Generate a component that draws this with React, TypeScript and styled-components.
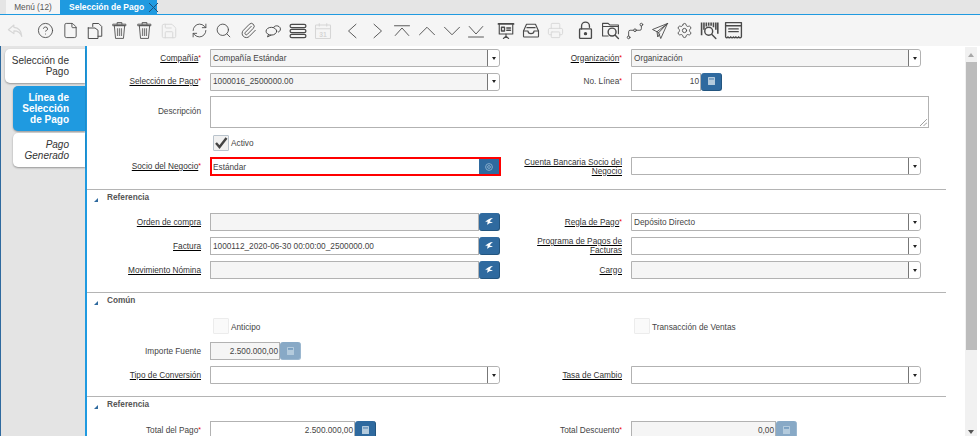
import React from 'react'
import styled, { createGlobalStyle } from 'styled-components'
import { CircleHelp, File, Save, RefreshCw, Search, Paperclip, Printer, Settings } from 'lucide-react'

const GlobalStyle = createGlobalStyle`
  html, body {
    margin: 0;
    padding: 0;
    background: #fff;
    overflow: hidden;
  }
  * {
    box-sizing: border-box;
  }
  body {
    font-family: "Liberation Sans", Arial, sans-serif;
    font-size: 8.25px;
    color: #333;
  }
`

const Page = styled.div`
  width: 980px;
  height: 436px;
  display: flex;
  flex-direction: column;
  overflow: hidden;
`

const TabBar = styled.div`
  height: 15px;
  flex: none;
  display: flex;
  padding-left: 6px;
  background: #e5e5e5;
  border-bottom: 1px solid #1f9ae0;
`

const TopTab = styled.div<{ $active?: boolean }>`
  height: 14px;
  display: flex;
  align-items: center;
  padding: ${(p) => (p.$active ? '0 0 0 9px' : '0 8px')};
  width: ${(p) => (p.$active ? '97px' : '54px')};
  gap: 4px;
  justify-content: ${(p) => (p.$active ? 'flex-start' : 'center')};
  background: ${(p) => (p.$active ? '#1f9ae0' : '#f5f5f5')};
  color: ${(p) => (p.$active ? '#fff' : '#555')};
  font-weight: ${(p) => (p.$active ? 'bold' : 'normal')};
  font-size: ${(p) => (p.$active ? '8.5px' : '8.25px')};
  white-space: nowrap;
`

const CloseMark = styled.svg`
  width: 11px;
  height: 11px;
  flex: none;
  stroke: #1d4f78;
  stroke-width: 1;
`

const Toolbar = styled.div`
  height: 31px;
  flex: none;
  display: flex;
  padding-left: 3.6px;
  gap: 5px;
  background: #f5f5f5;
`

const ToolGroup = styled.div`
  display: flex;
`

const ToolButton = styled.div<{ $off?: boolean }>`
  width: 24.75px;
  height: 31px;
  display: flex;
  align-items: center;
  justify-content: center;
  color: ${(p) => (p.$off ? '#d6d6d6' : '#4a4a4a')};
`

const Main = styled.div`
  flex: 1;
  min-height: 0;
  display: flex;
  border-left: 1px solid #2f6a9f;
`

const SideTabs = styled.div`
  width: 86px;
  flex: none;
  display: flex;
  flex-direction: column;
  align-items: flex-end;
  padding-top: 3px;
  background: #e4e4e4;
  border-right: 2px solid #1f9ae0;
`

const SideTab = styled.div<{ $level: number; $selected?: boolean }>`
  width: ${(p) => (p.$level ? '72px' : '80px')};
  margin-bottom: 2.5px;
  padding: 6px 16px 6px 4px;
  text-align: right;
  font-size: 10px;
  line-height: 11px;
  border-radius: 5px 0 0 5px;
  background: ${(p) => (p.$selected ? '#1f9ae0' : '#fff')};
  color: ${(p) => (p.$selected ? '#fff' : '#333')};
  font-weight: ${(p) => (p.$selected ? 'bold' : 'normal')};
  font-style: ${(p) => (p.$level && !p.$selected ? 'italic' : 'normal')};
  box-shadow: 0 1px 2px rgba(0, 0, 0, 0.35);
`

const Form = styled.div`
  width: 878px;
  flex: none;
  padding-top: 3px;
  overflow: hidden;
`

const Section = styled.div<{ $pad?: number }>`
  margin-right: 19px;
  padding-bottom: ${(p) => p.$pad ?? 13}px;
  border-bottom: 1px solid #b4b4b4;
  &:last-child {
    border-bottom: 0;
  }
`

const SectionHead = styled.div<{ $height?: number }>`
  height: ${(p) => p.$height ?? 23}px;
  display: flex;
  align-items: flex-start;
  gap: 9px;
  padding: 2.5px 0 0 7px;
  font-weight: bold;
  color: #555;
  line-height: 10px;
`

const Toggle = styled.svg`
  width: 4px;
  height: 4px;
  margin-top: 5px;
  fill: #2f6a9f;
`

const Grid = styled.div<{ $gap?: number }>`
  display: grid;
  grid-template-columns: 114px 290px 113px 290px;
  column-gap: 9px;
  row-gap: ${(p) => p.$gap ?? 6}px;
  grid-auto-rows: minmax(18px, auto);
`

const Label = styled.div<{ $lift?: boolean }>`
  display: flex;
  justify-content: flex-end;
  align-items: center;
  text-align: right;
  line-height: 9px;
  color: #444;
  padding-bottom: ${(p) => (p.$lift ? '2px' : '0')};
`

const Linked = styled.span`
  color: #333;
  text-decoration: underline;
  text-decoration-color: #000;
`

const Star = styled.span`
  color: #e00;
  font-size: 7px;
  position: relative;
  top: -1px;
`

const Control = styled.div`
  display: flex;
  align-items: stretch;
  min-width: 0;
`

const Input = styled.div<{ $readOnly?: boolean; $width?: number; $number?: boolean }>`
  height: 18px;
  flex: ${(p) => (p.$width ? 'none' : '1')};
  width: ${(p) => (p.$width ? `${p.$width}px` : 'auto')};
  display: flex;
  align-items: center;
  justify-content: ${(p) => (p.$number ? 'flex-end' : 'flex-start')};
  padding: 0 1px 0 2px;
  border: 1px solid #b2b2b2;
  background: ${(p) => (p.$readOnly ? '#f5f5f5' : '#fff')};
  color: #444;
  white-space: nowrap;
`

const ComboBox = styled.div<{ $readOnly?: boolean }>`
  height: 18px;
  flex: 1;
  display: flex;
  border: 1px solid #b2b2b2;
  border-radius: 0 3px 3px 0;
  background: ${(p) => (p.$readOnly ? '#f5f5f5' : '#fff')};
  color: #444;
`

const ComboText = styled.div`
  flex: 1;
  display: flex;
  align-items: center;
  padding-left: 2px;
`

const ComboArrow = styled.div`
  width: 12px;
  display: flex;
  align-items: center;
  justify-content: center;
  border-left: 1px solid #777;
  background: #fff;
  border-radius: 0 3px 3px 0;
  &::after {
    content: '';
    border: 2.5px solid transparent;
    border-top: 3px solid #222;
    border-bottom: 0;
  }
`

const ActionButton = styled.div<{ $off?: boolean }>`
  width: 21px;
  height: 18px;
  flex: none;
  display: flex;
  align-items: center;
  justify-content: center;
  border-radius: 3px;
  background: ${(p) => (p.$off ? '#88a9c6' : '#2f6a9f')};
  border-bottom: 1px solid ${(p) => (p.$off ? '#9bb7cf' : '#23557f')};
  border-right: 1px solid ${(p) => (p.$off ? '#9bb7cf' : '#23557f')};
`

const Description = styled.div`
  width: 719px;
  height: 32px;
  position: relative;
  border: 1px solid #b2b2b2;
  grid-column: 2 / 5;
`

const Grip = styled.svg`
  position: absolute;
  right: 1px;
  bottom: 1px;
  width: 7px;
  height: 7px;
  stroke: #555;
  stroke-width: 0.8;
  stroke-dasharray: 1 0.5;
`

const HighlightField = styled.div`
  width: 291px;
  height: 19px;
  display: flex;
  align-items: center;
  border: 2px solid #f00;
  padding-left: 1px;
  color: #444;
`

const HighlightText = styled.div`
  flex: 1;
  padding-top: 1px;
`

const HighlightButton = styled.div`
  width: 20px;
  height: 15px;
  display: flex;
  align-items: center;
  justify-content: center;
  background: #2f6a9f;
`

const CheckField = styled.div<{ $tall?: boolean }>`
  display: flex;
  align-items: center;
  gap: 2px;
  padding-left: 3px;
  height: ${(p) => (p.$tall ? '20px' : '18px')};
  color: #444;
`

const CheckText = styled.span`
  padding-top: 2px;
`

const CheckBox = styled.div<{ $checked?: boolean }>`
  width: 16px;
  height: 16px;
  display: flex;
  align-items: center;
  justify-content: center;
  border: 1px solid ${(p) => (p.$checked ? '#b9c3cc' : '#ececec')};
  border-radius: 1px;
  background: ${(p) => (p.$checked ? '#f1f1f1' : '#fafafa')};
`

const Scrollbar = styled.div`
  width: 12px;
  flex: none;
  height: 392px;
  margin-top: 1px;
  display: flex;
  flex-direction: column;
  background: #f1f1f1;
`

const ScrollArrow = styled.div<{ $down?: boolean }>`
  height: 15px;
  flex: none;
  display: flex;
  align-items: center;
  justify-content: center;
  &::after {
    content: '';
    border: 3.5px solid transparent;
    ${(p) => (p.$down ? 'border-top: 4px solid #555; border-bottom: 0;' : 'border-bottom: 4px solid #a8a8a8; border-top: 0;')}
  }
`

const ScrollThumb = styled.div`
  height: 288px;
  margin-left: 1px;
  background: #bcbcbc;
`

const ScrollRest = styled.div`
  flex: 1;
`

const Ic: React.FC<{ size?: number; width?: number; children: React.ReactNode }> = ({ size = 17, width = 1.4, children }) => (
  <svg
    width={size}
    height={size}
    viewBox="0 0 24 24"
    fill="none"
    stroke="currentColor"
    strokeWidth={width}
    strokeLinecap="round"
    strokeLinejoin="round"
  >
    {children}
  </svg>
)

const stroke = { size: 17, strokeWidth: 1.25 }

const UndoIcon = () => (
  <Ic size={19}>
    <path d="M10 5 3 11l7 5v-3.5c5 0 8 1.5 10 7-.5-7-3.5-11-10-11.5V5Z" />
  </Ic>
)

const CopyDocsIcon = () => (
  <Ic size={18} width={1.3}>
    <path d="M9 6V2h8l4 4v13h-5" />
    <path d="M3 8h9l4 3v11H3V8Z" />
  </Ic>
)

const TrashIcon = () => (
  <Ic size={19} width={1.1}>
    <path d="M9 4V2h6v2M4 4h16v2H4Z" />
    <path d="M5.500 6 7 22h10l1.500-16Z" />
    <path d="M9.500 9v10M12 9v10M14.500 9v10" strokeWidth="1.500" strokeLinecap="butt" opacity="0.7" />
  </Ic>
)

const ChatIcon = () => (
  <Ic>
    <ellipse cx="9" cy="13" rx="7.500" ry="5.500" />
    <path d="M5 17.500 3.500 21l5-2.500" />
    <path d="M12 7.500C13.500 5.600 16 5 18 5.600c3 .9 4.500 3.500 3.500 6-.5 1.200-1.300 2-2.500 2.600" />
  </Ic>
)

const StackIcon = () => (
  <Ic size={20} width={1.5}>
    <rect x="2.500" y="4" width="19" height="4" rx="2" />
    <rect x="2.500" y="10" width="19" height="4" rx="2" />
    <rect x="2.500" y="16" width="19" height="4" rx="2" />
  </Ic>
)

const CalendarIcon = () => (
  <svg width="18" height="18" viewBox="0 0 24 24" fill="none" stroke="currentColor" strokeWidth="1.400">
    <rect x="2" y="4" width="20" height="18" rx="1" />
    <path d="M2 9h20M7 1.500V6M17 1.500V6" />
    <text x="12" y="20" textAnchor="middle" fontSize="9" fontWeight="bold" fill="currentColor" stroke="none" fontFamily="Liberation Sans">
      31
    </text>
  </svg>
)

const ChevLeft = () => (
  <Ic size={18} width={1.2}>
    <path d="M16 3 6 12l10 9" />
  </Ic>
)
const ChevRight = () => (
  <Ic size={18} width={1.2}>
    <path d="m8 3 10 9-10 9" />
  </Ic>
)
const ChevFirst = () => (
  <Ic size={18} width={1.2}>
    <path d="M2 5h20M3 18 12 8l9 10" />
  </Ic>
)
const ChevUp = () => (
  <Ic size={18} width={1.2}>
    <path d="m2 17 10-10 10 10" />
  </Ic>
)
const ChevDown = () => (
  <Ic size={18} width={1.2}>
    <path d="m2 7 10 10L22 7" />
  </Ic>
)
const ChevLast = () => (
  <Ic size={18} width={1.2}>
    <path d="M3 6 12 16l9-10M2 20h20" />
  </Ic>
)

const ReportIcon = () => (
  <Ic size={18} width={1.5}>
    <path d="M2 2.500h20" strokeWidth="2.400" />
    <path d="M3 3v13h18V3" />
    <path d="M6 7h4v5H6ZM13 8h5M13 11h5" strokeWidth="1.800" />
    <path d="M12 16v3M8.500 22 12 19l3.500 3" />
  </Ic>
)

const TrayIcon = () => (
  <Ic size={18} width={1.5}>
    <path d="M6 3h12l4 9v7a1 1 0 0 1-1 1H3a1 1 0 0 1-1-1v-7l4-9Z" />
    <path d="M2 12h6c0 2.500 1.500 3.500 4 3.500s4-1 4-3.500h6M6.500 7.500h11" />
  </Ic>
)

const LockIcon = () => (
  <Ic size={19} width={1.7}>
    <rect x="4.500" y="10" width="15" height="12" rx="1" />
    <path d="M7 10V6.500a5 5 0 0 1 10 0V8" />
    <circle cx="12" cy="16" r="1.300" fill="currentColor" />
  </Ic>
)

const FolderSearchIcon = () => (
  <Ic size={19}>
    <path d="M9 19H2V3h7l2 2h11v11" />
    <path d="M2 7h20" />
    <circle cx="14" cy="14" r="5" strokeWidth="1.800" />
    <path d="m18 18 4 4" strokeWidth="1.800" />
  </Ic>
)

const RouteIcon = () => (
  <Ic size={18} width={1.2}>
    <circle cx="3.500" cy="20.500" r="1.800" />
    <circle cx="12" cy="11" r="1.800" />
    <circle cx="20.500" cy="3.500" r="1.800" />
    <path d="M3.500 18.500V13a2 2 0 0 1 2-2h4.500M14 11h4.500a2 2 0 0 0 2-2V5.500" />
  </Ic>
)

const PlaneIcon = () => (
  <Ic size={18} width={1.2}>
    <path d="M22 2 2 10l6 3 2 1 3 8 9-20Z" />
    <path d="M22 2 8 13l1 7 2.500-4M22 2 10 14.500" />
  </Ic>
)

const BarcodeSearchIcon = () => (
  <Ic size={19}>
    <path d="M2 2v16M5 2v9M8 2v5M11 2v4M14 2v4M17 2v6M20 2v9M22.500 2v14" strokeWidth="2" strokeLinecap="butt" />
    <circle cx="11" cy="13" r="5" strokeWidth="1.800" />
    <path d="m15 17 5 5" strokeWidth="1.800" />
  </Ic>
)

const ReceiptIcon = () => (
  <Ic size={19} width={1.7}>
    <path d="M2 2h20v18c-1 1.500-2.500 1.500-3.500 0-1 1.500-2.500 1.500-3.500 0-1 1.500-2.500 1.500-3 0-1 1.500-2.500 1.500-3.500 0-1 1.500-2.500 1.500-3.500 0-1 1.500-2 1.500-3 0V2Z" />
    <path d="M2 6h20M6 10h12M6 13.500h12" />
  </Ic>
)

const SwooshIcon = () => (
  <svg width="8" height="7" viewBox="0 0 8 7" fill="#fff">
    <path d="M8 0C5 .2 2 1.600 0 4.200c1.100-.4 2-.5 2.800-.4C2.300 4.800 2.200 6 2.600 7 3.300 5.600 5 4.900 8 4.800 7 4.100 5.800 3.700 4.800 3.500 5.500 2 6.700.9 8 0Z" />
  </svg>
)

const CalcIcon = () => (
  <svg width="7" height="8" viewBox="0 0 7 8">
    <rect width="7" height="8" rx="0.600" fill="#b4cbdd" />
    <rect x="1" y="1.200" width="5" height="1.500" fill="#2f6a9f" opacity="0.550" />
  </svg>
)

const BpIcon = () => (
  <svg width="8" height="8" viewBox="0 0 8 8" fill="none" stroke="#86abc9">
    <circle cx="4" cy="4" r="3.400" />
    <circle cx="4" cy="4" r="1.400" />
  </svg>
)

const CheckMark = () => (
  <svg width="14" height="14" viewBox="0 0 14 14" fill="none" stroke="#444" strokeWidth="2.400">
    <path d="m2 7 3.500 4L12.500 2" />
  </svg>
)

const Caption: React.FC<{ text: string; link?: boolean; req?: boolean; lift?: boolean }> = ({ text, link, req, lift }) => (
  <Label $lift={lift}>
    <div>
      {link ? <Linked>{text}</Linked> : text}
      {req && <Star>*</Star>}
    </div>
  </Label>
)

const Combo: React.FC<{ text?: string; readOnly?: boolean }> = ({ text, readOnly }) => (
  <Control>
    <ComboBox $readOnly={readOnly}>
      <ComboText>{text}</ComboText>
      <ComboArrow />
    </ComboBox>
  </Control>
)

const SearchField: React.FC<{ text?: string; readOnly?: boolean }> = ({ text, readOnly }) => (
  <Control>
    <Input $readOnly={readOnly}>{text}</Input>
    <ActionButton>
      <SwooshIcon />
    </ActionButton>
  </Control>
)

const NumberField: React.FC<{ text: string; width: number; readOnly?: boolean }> = ({ text, width, readOnly }) => (
  <Control>
    <Input $readOnly={readOnly} $width={width} $number>
      {text}
    </Input>
    <ActionButton $off={readOnly}>
      <CalcIcon />
    </ActionButton>
  </Control>
)

const Head: React.FC<{ text: string; height?: number }> = ({ text, height }) => (
  <SectionHead $height={height}>
    <Toggle viewBox="0 0 4 4">
      <path d="M4 0v4H0Z" />
    </Toggle>
    {text}
  </SectionHead>
)

export default function App() {
  return (
    <Page>
      <GlobalStyle />
      <TabBar>
        <TopTab>Menú (12)</TopTab>
        <TopTab $active>
          Selección de Pago
          <CloseMark viewBox="0 0 11 11">
            <path d="m1 1 9 9M10 1l-9 9" />
          </CloseMark>
        </TopTab>
      </TabBar>
      <Toolbar>
        <ToolGroup>
          <ToolButton $off><UndoIcon /></ToolButton>
        </ToolGroup>
        <ToolGroup>
          <ToolButton><CircleHelp {...stroke} /></ToolButton>
          <ToolButton><File {...stroke} /></ToolButton>
          <ToolButton><CopyDocsIcon /></ToolButton>
          <ToolButton><TrashIcon /></ToolButton>
          <ToolButton><TrashIcon /></ToolButton>
          <ToolButton $off><Save size={18} strokeWidth={1.25} /></ToolButton>
        </ToolGroup>
        <ToolGroup>
          <ToolButton><RefreshCw {...stroke} /></ToolButton>
          <ToolButton><Search {...stroke} /></ToolButton>
          <ToolButton><Paperclip {...stroke} /></ToolButton>
          <ToolButton><ChatIcon /></ToolButton>
          <ToolButton><StackIcon /></ToolButton>
          <ToolButton $off><CalendarIcon /></ToolButton>
        </ToolGroup>
        <ToolGroup>
          <ToolButton><ChevLeft /></ToolButton>
          <ToolButton><ChevRight /></ToolButton>
          <ToolButton><ChevFirst /></ToolButton>
          <ToolButton><ChevUp /></ToolButton>
          <ToolButton><ChevDown /></ToolButton>
          <ToolButton><ChevLast /></ToolButton>
        </ToolGroup>
        <ToolGroup>
          <ToolButton><ReportIcon /></ToolButton>
          <ToolButton><TrayIcon /></ToolButton>
          <ToolButton $off><Printer {...stroke} /></ToolButton>
        </ToolGroup>
        <ToolGroup>
          <ToolButton><LockIcon /></ToolButton>
          <ToolButton><FolderSearchIcon /></ToolButton>
          <ToolButton><RouteIcon /></ToolButton>
          <ToolButton><PlaneIcon /></ToolButton>
          <ToolButton><Settings {...stroke} /></ToolButton>
          <ToolButton><BarcodeSearchIcon /></ToolButton>
          <ToolButton><ReceiptIcon /></ToolButton>
        </ToolGroup>
      </Toolbar>
      <Main>
        <SideTabs>
          <SideTab $level={0}>Selección de Pago</SideTab>
          <SideTab $level={1} $selected>Línea de Selección de Pago</SideTab>
          <SideTab $level={1}>Pago Generado</SideTab>
        </SideTabs>
        <Form>
          <Section>
            <Grid $gap={5.5}>
              <Caption text="Compañía" link req />
              <Combo text="Compañía Estándar" readOnly />
              <Caption text="Organización" link req />
              <Combo text="Organización" readOnly />
              <Caption text="Selección de Pago" link req />
              <Combo text="1000016_2500000.00" readOnly />
              <Caption text="No. Línea" req />
              <NumberField text="10" width={70} />
              <Caption text="Descripción" lift />
              <Description>
                <Grip viewBox="0 0 7 7">
                  <path d="M0 7 7 0M3.500 7 7 3.500" />
                </Grip>
              </Description>
              <div />
              <CheckField>
                <CheckBox $checked>
                  <CheckMark />
                </CheckBox>
                <CheckText>Activo</CheckText>
              </CheckField>
              <div />
              <div />
              <Caption text="Socio del Negocio" link req />
              <HighlightField>
                <HighlightText>Estándar</HighlightText>
                <HighlightButton>
                  <BpIcon />
                </HighlightButton>
              </HighlightField>
              <Caption text="Cuenta Bancaria Socio del Negocio" link />
              <Combo />
            </Grid>
          </Section>
          <Section>
            <Head text="Referencia" />
            <Grid>
              <Caption text="Orden de compra" link />
              <SearchField readOnly />
              <Caption text="Regla de Pago" link req />
              <Combo text="Depósito Directo" />
              <Caption text="Factura" link />
              <SearchField text="1000112_2020-06-30 00:00:00_2500000.00" />
              <Caption text="Programa de Pagos de Facturas" link />
              <Combo />
              <Caption text="Movimiento Nómina" link />
              <SearchField readOnly />
              <Caption text="Cargo" link />
              <Combo readOnly />
            </Grid>
          </Section>
          <Section $pad={12}>
            <Head text="Común" />
            <Grid>
              <div />
              <CheckField $tall>
                <CheckBox />
                <CheckText>Anticipo</CheckText>
              </CheckField>
              <div />
              <CheckField $tall>
                <CheckBox />
                <CheckText>Transacción de Ventas</CheckText>
              </CheckField>
              <Caption text="Importe Fuente" />
              <NumberField text="2.500.000,00" width={70} readOnly />
              <div />
              <div />
              <Caption text="Tipo de Conversión" link />
              <Combo />
              <Caption text="Tasa de Cambio" link />
              <Combo />
            </Grid>
          </Section>
          <Section>
            <Head text="Referencia" height={24} />
            <Grid>
              <Caption text="Total del Pago" req />
              <NumberField text="2.500.000,00" width={145} />
              <Caption text="Total Descuento" req />
              <NumberField text="0,00" width={145} readOnly />
            </Grid>
          </Section>
        </Form>
        <Scrollbar>
          <ScrollArrow />
          <ScrollThumb />
          <ScrollRest />
          <ScrollArrow $down />
        </Scrollbar>
      </Main>
    </Page>
  )
}
